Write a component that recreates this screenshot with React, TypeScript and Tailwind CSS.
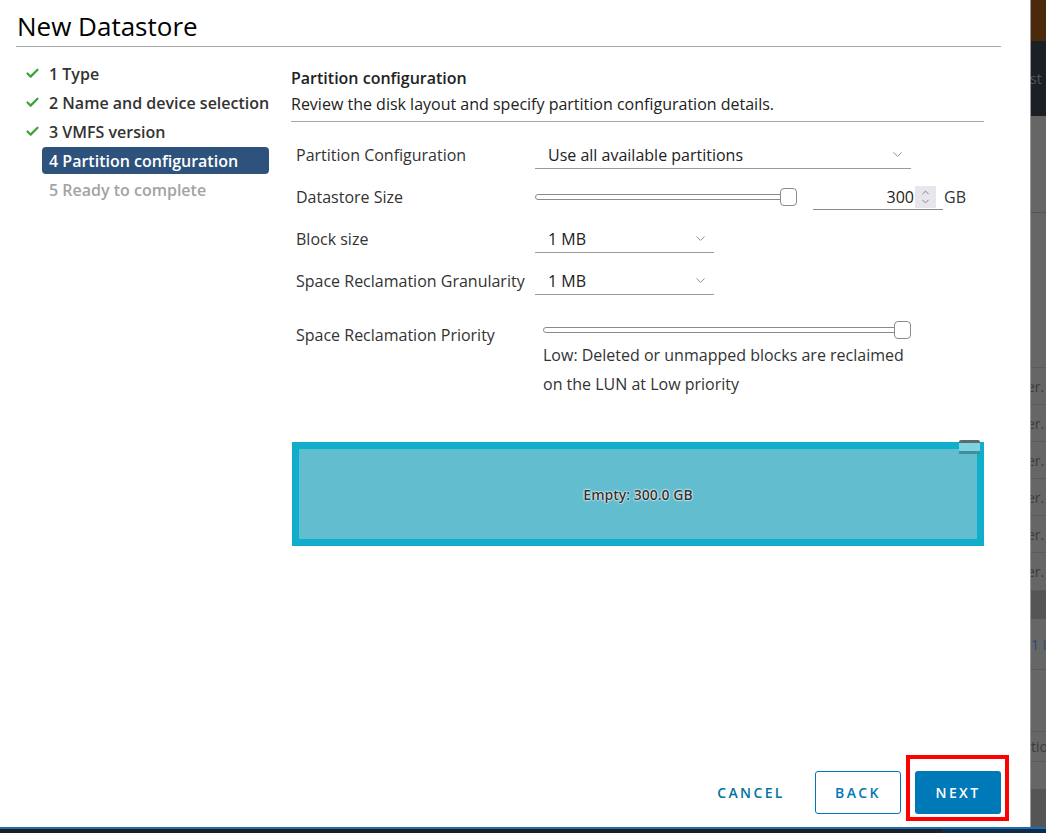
import { Check, ChevronDown, ChevronUp } from "lucide-react";

const STEPS = [
    { id: 1, label: "Type", done: true },
    { id: 2, label: "Name and device selection", done: true },
    { id: 3, label: "VMFS version", done: true },
    { id: 4, label: "Partition configuration", active: true },
    { id: 5, label: "Ready to complete" },
];

export default function App() {
    return <div className="w-[1046px] h-[833px] flex flex-col overflow-hidden bg-white text-[#333]"
        style={{ fontFamily: "'Open Sans', 'Noto Sans', sans-serif" }}>
        <div className="flex flex-1 min-h-0">
            <Modal />
            <BackdropStrip />
        </div>
        <div className="h-[6px] flex border-t-2 border-[#1b6fae]">
            <div className="w-[942px] bg-[#1c1f26]" />
            <div className="flex-1 bg-[#0d2a4b]" />
        </div>
    </div>
}

function Modal() {
    return <div className="w-[1031px] h-full flex flex-col bg-white border-r border-[#9a9a9a] pl-[16px] pr-[29px]">
        <div className="h-[47px] border-b border-[#a8a8a8] flex items-end pb-[4px]">
            <h1 className="text-[26px] leading-[32px] text-black pl-[1px]">New Datastore</h1>
        </div>
        <div className="flex flex-1">
            <StepNav />
            <div className="flex-1 pl-[16px] pr-[17px] pt-[21px] flex flex-col">
                <div className="text-[16px] leading-[20px] font-semibold text-[#222]">Partition configuration</div>
                <div className="text-[16px] leading-[20px] mt-[6px] text-[#222]">Review the disk layout and specify partition configuration details.</div>
                <div className="border-b border-[#a8a8a8] mt-[7px]" />
                <Form />
                <DiskBar />
                <div className="flex-1" />
                <Footer />
            </div>
        </div>
    </div>
}

function StepNav() {
    return <div className="w-[259px] pt-[12px] flex flex-col">
        {STEPS.map(s => <div key={s.id} className="h-[29px] flex items-center">
            <div className="w-[26px] pl-[9px] flex items-center">
                {s.done && <Check size={15} strokeWidth={3.5} className="text-[#3ca236]" />}
            </div>
            <div className={`h-[27px] flex items-center rounded-[4px] text-[16px] font-semibold whitespace-nowrap
                ${s.active ? "bg-[#2d527c] text-white pl-[7px] w-[227px]" : s.id === 5 ? "text-[#a3a3a3] pl-[7px]" : "text-[#333] pl-[7px]"}`}>
                {s.id} {s.label}
            </div>
        </div>)}
    </div>
}

function Slider({ width }: { width: number }) {
    return <div className="h-[18px] flex items-center" style={{ width }}>
        <div className="flex-1 h-[6px] border border-[#8a8a8a] rounded-l-full bg-white" />
        <div className="w-[17px] h-[18px] rounded-[4px] border border-[#8a8a8a] bg-white -ml-[1px]" />
    </div>
}

function Select({ value, width }: { value: string; width: number }) {
    return <div className="h-[28px] border-b border-[#9a9a9a] flex items-center justify-between pl-[13px] pr-[6px]"
        style={{ width }}>
        <span className="text-[16px] text-[#222]">{value}</span>
        <ChevronDown size={15} strokeWidth={1.5} className="text-[#8a8a8a]" />
    </div>
}

function FormRow({ label, children }: { label: string; children: React.ReactNode }) {
    return <div className="h-[42px] flex items-center">
        <div className="w-[244px] pl-[5px] text-[16px] text-[#333] whitespace-nowrap">{label}</div>
        {children}
    </div>
}

function Form() {
    return <div className="flex flex-col mt-[12px]">
        <FormRow label="Partition Configuration">
            <Select value="Use all available partitions" width={376} />
        </FormRow>
        <FormRow label="Datastore Size">
            <Slider width={262} />
            <div className="ml-[16px] w-[130px] h-[25px] border-b border-[#8a8a8a] flex items-center justify-end pr-[7px]">
                <span className="text-[16px] text-[#222]">300</span>
                <div className="w-[21px] h-[22px] bg-[#e6e6ec] flex flex-col items-center justify-center ml-[1px]">
                    <ChevronUp size={11} strokeWidth={2} className="text-[#7a7a7a] -mb-[1px]" />
                    <ChevronDown size={11} strokeWidth={2} className="text-[#7a7a7a] -mt-[1px]" />
                </div>
            </div>
            <span className="ml-[1px] text-[16px] text-[#333]">GB</span>
        </FormRow>
        <FormRow label="Block size">
            <Select value="1 MB" width={179} />
        </FormRow>
        <FormRow label="Space Reclamation Granularity">
            <Select value="1 MB" width={179} />
        </FormRow>
        <div className="flex mt-[19px]">
            <div className="w-[244px] pl-[5px] mt-[4px] text-[16px] leading-[20px] text-[#333]">Space Reclamation Priority</div>
            <div className="flex flex-col pl-[8px]">
                <Slider width={368} />
                <div className="mt-[2px] text-[16px] leading-[29px] text-[#333]">
                    Low: Deleted or unmapped blocks are reclaimed<br />on the LUN at Low priority
                </div>
            </div>
        </div>
    </div>
}

function DiskBar() {
    return <div className="relative ml-[1px] mt-[43px] h-[104px] border-[7px] border-[#10aecb] bg-[#62bdcf] flex items-center justify-center">
        <div className="absolute inset-0 border border-[#5cc0d2]" />
        <span className="relative text-[14px] font-semibold text-[#333]"
            style={{ textShadow: "0 0 2px #fff, 0 0 2px #fff, 0 0 1px #fff" }}>Empty: 300.0 GB</span>
        <div className="absolute -top-[9px] right-[-3px] w-[21px] h-[14px] flex flex-col">
            <div className="h-[3px] bg-[#5d6b6e] rounded-t-[2px]" />
            <div className="flex-1 bg-[#7fd3e0] border-b-[3px] border-[#3f8f9c]" />
        </div>
    </div>
}

function Footer() {
    const base = "h-[43px] w-[86px] rounded-[3px] text-[14px] font-semibold tracking-[0.17em] flex items-center justify-center"
    return <div className="flex justify-end items-center gap-[14px] pb-[13px] -mr-[17px]">
        <button className={`${base} text-[#0072a3] mr-[7px]`}>CANCEL</button>
        <button className={`${base} border border-[#0079b8] text-[#0079b8]`}>BACK</button>
        <div className="relative">
            <button className={`${base} w-[85px] bg-[#0079b8] text-white`}>NEXT</button>
            <div className="absolute left-[-9px] top-[-16px] w-[103px] h-[66px] border-[4px] border-[#ff0000]" />
        </div>
    </div>
}

function BackdropStrip() {
    const rows = ["er.", "er.", "er.", "er.", "er."]
    return <div className="flex-1 flex flex-col bg-[#666] text-[#3b3b3b] text-[14px] overflow-hidden whitespace-nowrap">
        <div className="h-[41px] bg-[#4a2a0a]" />
        <div className="h-[75px] bg-[#1c1f25] text-[#555] flex items-center -ml-[1px]">st</div>
        <div className="h-[97px] border-b border-[#555]" />
        <div className="h-[155px] border-b border-[#5a5a5a]" />
        {rows.map((r, i) => <div key={i} className="h-[37px] border-b border-[#5a5a5a] flex items-center -ml-[4px]">{r}</div>)}
        <div className="h-[38px] border-b border-[#5a5a5a] flex items-center -ml-[4px]">er.</div>
        <div className="h-[28px] bg-[#555]" />
        <div className="h-[51px] border-b border-[#5a5a5a] flex items-center text-[#2a4a7a]">1 i</div>
        <div className="h-[62px] border-b border-[#5a5a5a]" />
        <div className="h-[30px] border-b border-[#5a5a5a] flex items-center">tio</div>
        <div className="h-[27px]" />
        <div className="flex-1 bg-[#555]" />
    </div>
}
